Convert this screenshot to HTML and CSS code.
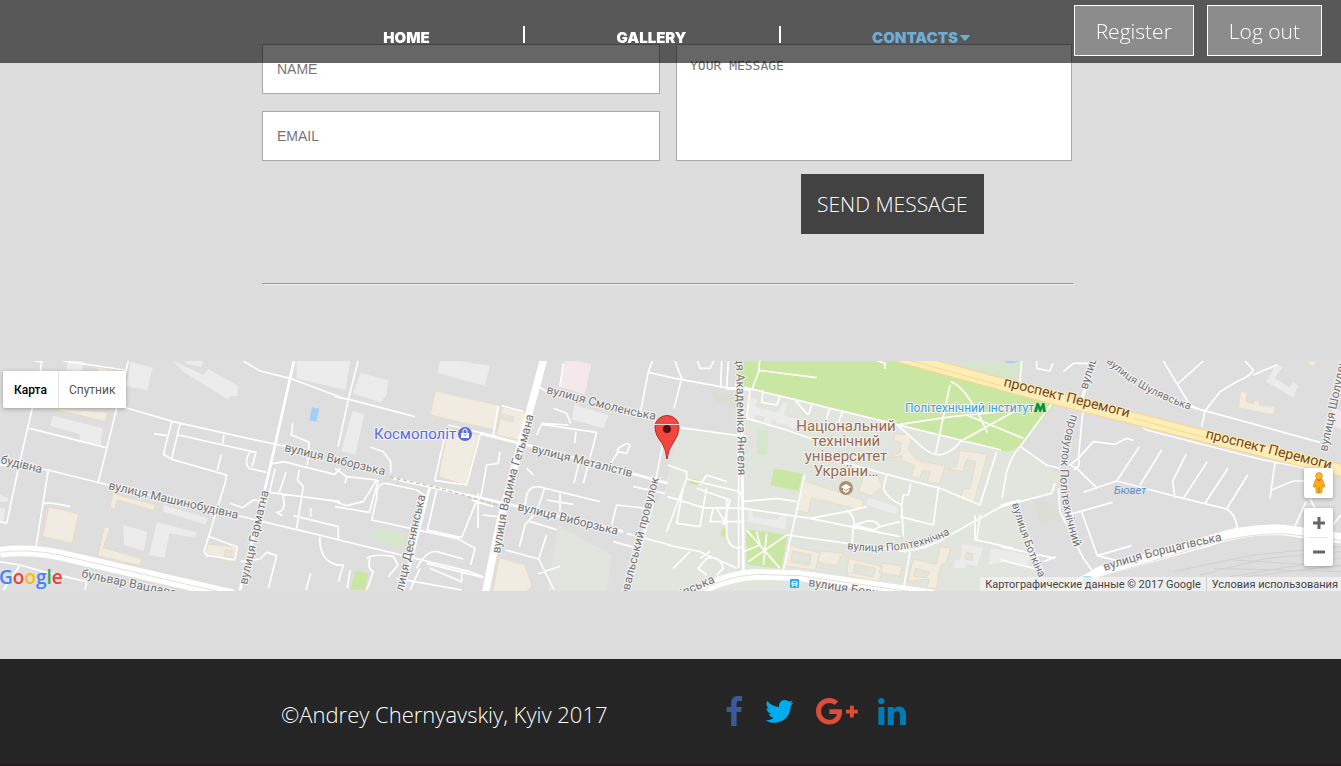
FILE: index.html
```html
<!DOCTYPE html>
<html lang="en">
<head>
<meta charset="utf-8">
<title>Contacts</title>
<link rel="stylesheet" href="styles.css">
</head>
<body>
<header class="header">
  <nav class="nav" aria-label="Main">
    <a class="nav-link" href="#home">HOME</a>
    <a class="nav-link" href="#gallery">GALLERY</a>
    <a class="nav-link active" href="#contacts">CONTACTS<svg class="caret" viewBox="0 0 10 6" aria-hidden="true"><path d="M.8 0h8.4q1 .2.4 1L5.6 5.500q-.6.6-1.200 0L.4 1Q-.200.200.8 0z"/></svg></a>
  </nav>
  <div class="account">
    <button class="account-btn" type="button">Register</button>
    <button class="account-btn" type="button">Log out</button>
  </div>
</header>

<main>
  <section class="contact">
    <form class="form">
      <div class="fields">
        <input class="field" type="text" placeholder="NAME" aria-label="Name">
        <input class="field" type="email" placeholder="EMAIL" aria-label="Email">
      </div>
      <div class="message">
        <textarea class="field area" placeholder="YOUR MESSAGE" aria-label="Your message"></textarea>
        <button class="send" type="button">SEND MESSAGE</button>
      </div>
    </form>
    <hr class="rule">
  </section>

  <section class="map" aria-label="Map">
    <svg class="map-canvas" viewBox="0 361 1341 230" preserveAspectRatio="xMidYMid slice">
      <g transform="translate(0 355) scale(.33333)">
        <!-- campus and park areas -->
        <path class="campus" d="M1995 400L2010 330L2035 210L2210 240L2225 90L2700 210L3010 285L3065 275L3180 360L3165 410L3030 455L3130 700V720H1860L1900 570Z"/>
        <path class="campus" d="M1675 510L1835 600L1820 720H1640Z"/>
        <path class="park" d="M2205 10H2690L3003 100L3170 140L3060 275Q3030 295 2990 285L2700 208L2225 92Z"/>
        <path class="park-pale" d="M2830 10H3078L3062 80L3003 68Z"/>
        <path class="water" d="M2998 10H3068Q3050 27 3020 24Z"/>
        <path class="park" d="M2238 523L2362 540L2345 642L2240 628ZM2322 340L2408 356L2395 408L2312 390ZM2070 370L2098 374L2092 390L2066 386ZM2166 518l14 3-5 24-13-3z"/>
        <path class="park" d="M1064 648L1106 654L1094 705H1052Z"/>
        <path class="park-pale" d="M1122 524Q1160 518 1218 540Q1224 558 1208 576Q1160 572 1124 556Q1115 540 1122 524ZM2272 228L2304 224L2302 300L2270 298Z"/>
        <path class="pond" d="M936 157L958 161L949 200L928 196Z"/>
        <path class="clinic" d="M1696 10L1774 28L1754 118L1680 96ZM3996 160L4023 168V222L3996 212Z"/>
        <!-- grey buildings -->
        <path class="block" d="M392 22L458 38L442 106L378 94ZM204 10H254L244 50L200 44ZM160 182L308 220L302 272L238 258L240 238L150 212ZM890 10H1052L1036 106L890 70ZM520 18L610 60L625 42L714 92L712 124L690 124L685 134L552 52ZM545 10L610 18L604 36L562 26ZM1082 54L1165 76L1160 120L1142 142L1060 116ZM1058 168L1094 178L1066 298L1024 288ZM1322 10L1470 32L1454 92L1312 54ZM1722 150L1826 180L1810 220L1716 194ZM370 510L442 530L432 588L372 570ZM470 502L590 532L585 548L508 535L494 608L448 600ZM490 450L625 490L615 508L490 470ZM0 420L24 428V440H0ZM0 460H16L10 500L0 496Z"/>
        <path class="block" d="M2252 126L2272 134L2266 155L2336 175L2350 140L2364 144L2352 180L2430 205V220L2390 214L2380 225L2365 210L2330 205L2322 190L2312 208L2290 202L2295 186L2268 180L2262 196L2242 190ZM2245 460L2258 462L2258 486L2330 495L2348 475L2362 478L2354 522L2242 500ZM2605 428L2694 456L2688 478L2600 450ZM2886 566L2948 578L2932 634L2898 628L2895 640H2860L2864 616H2882ZM2974 580L3040 590V616L2965 630ZM3830 26L3848 36L3824 68L3868 98L3880 82L3894 94L3880 128L3798 80ZM3003 585L3090 600L3084 632L3010 620Z"/>
        <path class="dim" d="M2130 108L2204 120L2205 160L2150 140ZM3100 434L3160 446L3178 490L3120 508Z"/>
        <!-- sand buildings -->
        <path class="sand" d="M145 158L322 172L316 200L130 154ZM292 36L350 48V62L290 48ZM338 416L466 450L460 466L352 434L344 462L330 458ZM146 456L236 476L216 564L128 544ZM314 516L330 518L310 578L424 612L420 632L294 602ZM622 568L710 576L694 622L616 596ZM1306 108L1500 152L1488 226L1290 180ZM1508 156L1578 174L1558 256L1490 240ZM1344 220L1436 240L1398 392L1316 364ZM1498 608L1574 630L1596 692L1580 710H1478Z"/>
        <path class="sand" d="M2414 378L2590 436L2584 466L2434 428L2424 474L2388 468ZM2590 362L2636 366L2646 396L2612 422L2576 408ZM2686 236L2734 240L2726 288L2755 318L2836 332L2818 386L2782 380L2790 350L2768 346L2758 370L2734 364L2744 332L2704 316L2706 302L2662 310L2700 292L2704 262L2680 256ZM2880 286L2962 298L2922 442L2880 434L2890 402L2910 400L2928 320L2900 314L2888 350L2842 342L2870 335ZM2366 570L2460 594L2446 646L2354 632ZM2462 588L2528 594L2510 632L2452 620ZM2546 610L2648 634L2638 680L2540 662ZM2646 624L2706 632L2700 664L2638 652ZM2740 612L2810 628L2820 575L2852 580L2838 622L2822 630L2810 700H2780L2788 672L2724 678ZM3722 110L3742 112L3738 140L3760 146L3764 136L3780 138L3778 150L3826 154L3820 180L3716 158ZM3915 18H3955L3938 34Z"/>
        <path class="hole" d="M2378 588L2434 600L2428 632L2370 620ZM2566 626L2626 640L2620 666L2558 654ZM2746 640L2788 650L2780 668L2742 664ZM2898 592l22 4-4 20-22-4zM676 584l22 2-4 24-22-4zM1508 178L1542 186L1540 200L1504 192Z"/>
        <!-- rail yard -->
        <path class="rail" d="M3520 650L3760 600L4023 575M3600 660L3800 610L4023 590M3690 665L4023 610M3740 665L4023 630M3640 640L4023 650M3700 615L4023 635"/>

        <!-- side streets -->
        <g class="street">
          <path d="M125 18L120 60L60 318L20 505L0 500M105 18L130 22M385 18L350 160L295 382M145 345L108 575M730 18L780 48L870 70L1020 126M370 156L520 200L720 245L860 275M80 218L318 278M515 200L490 298L518 314L680 360L675 385L612 590L622 606M540 206L515 312M462 236L500 242M535 240L768 292L756 335M672 240L668 266M750 290Q730 325 748 340L802 353M664 298L652 346M878 205L874 240L928 262L922 330M808 328L850 320L1004 358L1020 340M826 340L808 412M858 352L838 412M898 345L892 375L910 395L890 520M808 412L1020 440M848 418Q862 470 830 472L848 482M690 445L728 458L760 435L800 440M880 482L1015 515V550M932 460V485M628 545L712 576L704 615L616 600M720 620L780 612L800 592L830 602L805 700M960 545Q955 620 1020 632M932 655L918 705M130 446Q150 440 210 455M0 620L60 630L130 650L260 680L255 705M60 630L10 705M190 18L375 45M0 330L145 345L300 384L890 524L1020 555"/>
          <path d="M1074 18L1046 130L1014 275M1005 125L1050 134L1245 185M1110 276L1150 290L1172 320V355M1005 340L1040 365L1130 375M1035 385L1040 365M1130 375L1090 440L1040 452L1005 440M1135 375L1108 472L1005 455M1160 385Q1128 382 1130 430L1115 495L1370 550L1425 580L1412 630M1005 552L1410 650L1450 665M1160 385L1250 405L1280 425M1310 405L1282 525L1385 548L1435 425M1340 220L1304 376L1400 390L1440 240M1345 210L1490 245M1495 152L1480 240M1505 152L1570 170M1500 290L1495 325L1460 330L1442 430M1430 440L1480 455M1448 480L1505 486M1434 415V520M1415 435L1430 440M1625 205L1705 210M1610 240L1625 208L1790 232L1750 385M1700 175L1712 205M1660 160L1700 175M1728 230L1724 265M1740 310L1722 385M1850 300L1855 280L1880 265L1890 270L1880 295L1854 290L1830 330M1600 360L1580 340M1580 420Q1590 390 1620 396L1800 440M1575 450L1580 420M1634 400L1610 470L1575 510L1558 575M1680 415V470M1640 435L1720 448M1590 500L1670 524M1640 540L1616 612L1662 705M1615 656L1680 634M1516 585L1616 612M1250 640Q1280 585 1310 590L1390 612M1280 625L1450 668M1385 645V680L1290 640M1260 640L1230 705M1100 610Q1120 595 1180 604L1194 630L1165 665M1190 670L1385 705M1110 610Q1100 640 1120 650L1100 705M1005 630H1030L1015 680M1050 645L1042 700"/>
          <path d="M1610 90L1640 110M1690 25L1680 95M1960 10L1945 50L1922 170M1945 52L2025 70L2190 100M1980 210L2240 245M1988 270L1968 370M1900 395L1995 415M1835 510L1850 450L1940 460M1840 560L1905 578M1880 535L2010 570M2025 18L2045 70L2022 160M2090 10L2100 40H2130L2145 10M2165 18L2162 98M2185 18L2180 98M2190 100L2250 105L2240 190L2360 225L2460 260M2280 10L2276 50L2255 105M2276 46L2450 68M2610 10L2655 25V42M2205 90L3003 285M2290 105L2285 142L2330 150L2340 125M2380 130L2425 180M2435 150L2425 180M2528 170L2510 215M2490 158L2475 205M2852 80Q2900 95 2962 232M2850 90L2806 300M2700 208L2855 185L3003 170M2880 260L3050 165M2900 180L3070 250M2690 208L2760 270Q2790 300 2820 300Q2860 290 2880 260M2003 330L2060 350V370L2000 530M2060 372L2220 410L2230 440L2330 430L2390 440M2090 400L2190 435L2170 510M2120 360L2180 380M2100 390L2120 360M2003 425L2110 458L2230 460L2430 490L2700 545M2050 398L2030 505L2100 515M2140 460L2130 500H2230M2150 460L2180 510M2180 430V540Q2190 590 2230 575M2100 515L2120 398M2414 360L2350 645M2003 570L2100 590L2210 640M2120 610Q2160 600 2170 640L2150 660M2120 610L2095 640L2120 660M2130 590L2100 610M2020 640L2070 590M2240 525L2340 640M2360 540L2245 620M2300 535L2290 630M2270 530L2280 570L2230 590M2362 540L2720 590M2430 490L2540 470L2600 455M2540 465Q2570 490 2560 515L2556 565M2560 515Q2620 480 2640 515L2700 500M2640 515L2622 525L2560 510M2520 320L2650 355L2820 400L2940 450L2990 290M2660 360L2650 400Q2660 430 2705 450L2710 420H2725L2732 385M2705 450L2710 545M2700 485L2800 510L2815 400M2730 590L2710 705M2925 480V555L3003 570M2940 480L2930 555L3040 580M2216 180V640"/>
          <path d="M2710 590Q2790 580 2850 540L3003 455L3155 415L3165 385M3065 18L3060 80M3110 18V40L3150 48L3158 25M3190 50L3220 25H3280M3490 18L3570 150L3615 170L3605 215M3535 85L3610 18M3735 18L3760 45Q3755 62 3710 80L3660 110L3615 168M3760 60L3830 30M3570 155L3960 262M3415 205L3440 225L3790 315L3950 345M3825 322L3810 430M3815 405L3880 378H3920M3160 140L3062 272Q3035 300 3020 350L3006 430M3062 275L3140 330L3180 340M3250 155L3235 310L3210 330L3230 340L3292 400M3235 310L3280 260L3345 268L3380 250L3400 256M3235 310Q3245 335 3220 345M3250 412L3350 378L3550 430L3680 462Q3710 480 3712 525M3418 275L3350 378M3485 285L3420 390M3558 298L3518 380L3525 428M3622 320L3550 430M3684 340L3615 445M3743 360L3680 462M3210 478L3338 442M3245 470L3292 602L3395 572M3292 602L3400 630M3003 450L3060 435M3175 400L3180 470L3250 610L3275 645M3040 445L3090 560L3130 650M3003 575L3165 610M3003 615L3120 645M3130 620L3168 605M3918 440L3880 525M3930 430L3945 460M4023 480L3990 520"/>
        </g>
        <!-- wider streets -->
        <path class="road-mid" d="M882 18L805 360L720 705M1290 395L1210 705M1960 440L1880 720M1440 235L1600 275L2003 385M1180 370L1535 450L1870 530M2180 100H2225L2230 650M3282 18L3240 150"/>
        <path class="trail" d="M1170 366L1300 395L1500 452M1195 366L1192 390"/>
        <path class="road-wide" d="M1632 10L1580 200L1500 500L1455 720"/>
        <!-- boulevards -->
        <path class="avenue" d="M0 592Q80 580 180 600L700 720M2080 720Q2160 665 2270 658L2400 662L2800 720M3180 720L3300 650L3620 560Q3730 520 3850 525L4023 550"/>
        <path class="avenue-line" d="M0 592Q80 580 180 600L700 720M2090 718Q2160 665 2270 658L2400 662L2800 720M3200 718L3300 666L3620 570Q3730 536 3850 536L4023 556"/>
        <path class="highway-edge" d="M2700 5L3150 127L3400 190L4040 350"/>
        <path class="highway" d="M2700 5L3150 127L3400 190L4040 350"/>
        <path class="highway-line" d="M2700 8L3003 92M3400 190L3640 254"/>
      </g>

      <defs>
        <path id="pVyb" d="M284 451L400 479"/>
        <path id="pSmol" d="M546 393L580 402Q630 417 680 424"/>
        <path id="pPol" d="M847 549Q880 554 910 548T960 528"/>
        <path id="pSchul" d="M1106 362Q1130 385 1160 398T1210 416"/>
        <path id="pProv" d="M1071 414Q1055 465 1063 505T1084 572"/>
        <path id="pBor" d="M1105 571Q1150 555 1240 537"/>
        <path id="pGet" d="M500 554Q510 490 524 450T537 380"/>
        <path id="pBotk" d="M1012 504Q1025 550 1045 590"/>
        <path id="pInst" d="M628 597Q642 540 664 460"/>
        <path id="pKievska" d="M683 597Q705 585 735 576"/>
      </defs>
      <g class="label">
        <text transform="translate(0 463) rotate(14)">будівна</text>
        <text transform="translate(108 489) rotate(13)">вулиця Машинобудівна</text>
        <text transform="translate(81 577) rotate(12)">бульвар Вацлава</text>
        <text transform="translate(247 585) rotate(-77)">вулиця Гарматна</text>
        <text><textPath href="#pVyb">вулиця Виборзька</textPath></text>
        <text transform="translate(402 597) rotate(-77)">улиця Деснянська</text>
        <text><textPath href="#pGet">вулиця Вадима Гетьмана</textPath></text>
        <text><textPath href="#pSmol">вулиця Смоленська</textPath></text>
        <text transform="translate(531 452) rotate(14)">вулиця Металістів</text>
        <text transform="translate(517 510) rotate(14)">вулиця Виборзька</text>
        <text><textPath href="#pInst">овальський провулок</textPath></text>
        <text transform="translate(736 357) rotate(89)">ця Академіка Янгеля</text>
        <text><textPath href="#pKievska">івська</textPath></text>
        <text transform="translate(808 586) rotate(9)">вулиця Борщагівська</text>
        <text class="small"><textPath href="#pPol">вулиця Політехнічна</textPath></text>
        <text class="small"><textPath href="#pSchul">вулиця Шулявська</textPath></text>
        <text><textPath href="#pProv">провулок Політехнічний</textPath></text>
        <text class="small"><textPath href="#pBotk">вулиця Боткіна</textPath></text>
        <text><textPath href="#pBor">вулиця Борщагівська</textPath></text>
        <text transform="translate(1087 390) rotate(-72)">вулиця</text>
        <text transform="translate(1327 452) rotate(-78)">вулиця Шолуденка</text>
      </g>
      <g class="label label-road">
        <text transform="translate(1003 386) rotate(14)">проспект Перемоги</text>
        <text transform="translate(1205 438) rotate(14)">проспект Перемоги</text>
      </g>
      <g class="label label-uni">
        <text x="846" y="431">Національний</text>
        <text x="846" y="446">технічний</text>
        <text x="846" y="461">університет</text>
        <text x="846" y="476">України…</text>
      </g>
      <text class="label label-shop" x="374" y="439">Космополіт</text>
      <text class="label label-metro" x="905" y="412">Політехнічний інститут</text>
      <text class="label label-water" x="1114" y="494">Бювет</text>

      <circle cx="465" cy="434" r="7" fill="#5b6bd8"/>
      <path d="M461 433h8v5h-8z" fill="#fff"/>
      <path d="M463 433v-2a2 2 0 0 1 4 0v2" fill="none" stroke="#fff"/>
      <path d="M463.500 434.500q1.500 2 3 0" fill="none" stroke="#5b6bd8" stroke-width=".8"/>
      <circle cx="846" cy="488" r="7" fill="#b08d73"/>
      <path d="M841 487l5-3 5 3-5 3zM843 489l3 2 3-2v2l-3 2-3-2z" fill="#fff"/>
      <path d="M1034 412l2.500-9h2l2 4 2-4h2l1.500 9h-3l-.5-4-1.500 4h-1.500l-1.500-4-1 4z" fill="#0b9444"/>
      <rect x="790" y="579" width="9" height="9" rx="1" fill="#1faeef"/>
      <path d="M792 585v-3q2.500-1.500 5 0v3zM792 587l1-2M797 587l-1-2M792 583.500h5" fill="none" stroke="#fff"/>
      <rect x="1083" y="576" width="8" height="8" rx="1" fill="#a8def5"/>
      <g class="marker">
        <path d="M667 459q-1-9-5-16-7-8-7-16a12 11.500 0 0 1 24 0q0 8-6 16-5 7-6 16z" fill="#f2473f" stroke="#b32d28"/>
        <circle cx="667" cy="429" r="4" fill="#54130f"/>
        <path d="M654 424.500h26" stroke="#ffd4cf"/>
      </g>
    </svg>

    <div class="map-types">
      <button class="map-type current" type="button">Карта</button>
      <button class="map-type" type="button">Спутник</button>
    </div>
    <div class="map-logo" role="img" aria-label="Google"><span class="g-blue">G</span><span class="g-red">o</span><span class="g-yellow">o</span><span class="g-blue">g</span><span class="g-green">l</span><span class="g-red">e</span></div>
    <div class="map-tools">
      <button class="pegman" type="button" aria-label="Street view">
        <svg viewBox="0 0 14 22" width="14" height="22"><path d="M3.500 7.500h7l2.500 7-1.600.8-1-2.300-.6 8H4.300l-.6-8-1 2.300L1 14.500z" fill="#f9ae1b" stroke="#d58a12" stroke-width=".7"/><circle cx="7" cy="4" r="3.400" fill="#f9b62b" stroke="#d58a12" stroke-width=".7"/><path d="M4.500 7.500L7 10l2.500-2.500z" fill="#e8742a"/><path d="M7 15v6" stroke="#c87a12"/></svg>
      </button>
      <div class="zoom">
        <button class="zoom-btn" type="button" aria-label="Zoom in"><svg viewBox="0 0 12 12" width="12" height="12"><path d="M6 0v12M0 6h12" stroke="#666" stroke-width="3"/></svg></button>
        <button class="zoom-btn" type="button" aria-label="Zoom out"><svg viewBox="0 0 12 12" width="12" height="12"><path d="M0 6h12" stroke="#666" stroke-width="3"/></svg></button>
      </div>
    </div>
    <div class="map-legal"><span>Картографические данные © 2017 Google</span><a href="#terms">Условия использования</a></div>
  </section>
</main>

<footer class="footer">
  <p class="copy">©Andrey Chernyavskiy, Kyiv 2017</p>
  <div class="social">
    <a href="#facebook" aria-label="Facebook"><svg width="17" height="30" viewBox="0 0 17 30" fill="#3b5998"><path d="M16 .2v4.800h-2.800c-2.200 0-2.600 1-2.600 2.500v3.400h5.200l-.7 5.200h-4.500V30H5.200V16.100H.5v-5.200h4.700V7C5.200 2.500 7.900 0 12 0c1.900 0 3.600.1 4 .2z"/></svg></a>
    <a href="#twitter" aria-label="Twitter"><svg width="29" height="23" viewBox="0 0 28 23" fill="#00aced"><path d="M28 2.700a11 11 0 0 1-2.800 2.900C25.600 14 19.400 22.800 8.800 22.800c-3.200 0-6.200-.9-8.800-2.600 3 .4 6-.5 8.400-2.400-2.500 0-4.600-1.700-5.300-4 .8.200 1.700.1 2.500-.1C3 13.200 1 10.900 1 8.100c.8.400 1.700.7 2.600.7C1.100 7 .300 3.700 1.900 1.100c2.800 3.500 7 5.800 11.800 6C12.800 3.500 15.500 0 19.300 0c1.700 0 3.200.7 4.200 1.800 1.300-.3 2.500-.7 3.600-1.400-.4 1.300-1.300 2.500-2.500 3.200 1.200-.2 2.300-.500 3.400-.9z"/></svg></a>
    <a href="#googleplus" aria-label="Google Plus"><svg width="40" height="27" viewBox="0 0 40 27" fill="#dd4b39"><path d="M13.300 11.200h12.600c.1.700.2 1.300.2 2.200C26.100 21 21 26.500 13.300 26.500 5.900 26.500 0 20.700 0 13.300S5.900 0 13.300 0c3.600 0 6.600 1.300 8.900 3.500l-3.600 3.400c-1-.9-2.700-2-5.300-2-4.500 0-8.200 3.700-8.200 8.400s3.700 8.400 8.200 8.400c5.300 0 7.200-3.800 7.500-5.800h-7.500zM34 7.700h3.800v4h4v3.900h-4v4H34v-4h-4v-3.900h4z"/></svg></a>
    <a href="#linkedin" aria-label="LinkedIn"><svg width="28" height="27" viewBox="0 0 28 27" fill="#007bb6"><path d="M.4 8.900h6V27h-6zM3.400 0c2 0 3.300 1.400 3.300 3.100 0 1.800-1.300 3.200-3.400 3.200C1.300 6.300 0 4.900 0 3.100 0 1.400 1.400 0 3.400 0zM9.700 8.900h6v2.600c.8-1.200 2.200-3 5.400-3 4 0 6.900 2.600 6.900 8.200V27h-6v-9.700c0-2.400-.9-4.100-3-4.100-2.200 0-3.300 1.700-3.300 4.100V27h-6z"/></svg></a>
  </div>
</footer>
</body>
</html>
```

FILE: styles.css
```css
* { box-sizing: border-box; }

body {
  margin: 0;
  min-height: 100vh;
  display: flex;
  flex-direction: column;
  background: #ddd;
  font-family: "Open Sans", sans-serif;
  font-weight: 300;
  overflow-x: hidden;
}

button { font: inherit; cursor: pointer; }

/* Header */
.header {
  position: fixed;
  inset: 0 0 auto;
  z-index: 10;
  height: 63px;
  display: grid;
  grid-template-columns: minmax(0, 1fr) 782px minmax(0, 1fr);
  background: rgba(0, 0, 0, .6);
}

.nav {
  grid-column: 2;
  display: grid;
  grid-template-columns: 234px 256px 1fr;
  align-content: start;
  padding: 26px 0 0 11px;
}

.nav-link {
  height: 17px;
  padding-top: 3px;
  border-right: 2px solid #fff;
  color: #fff;
  font: 900 15px/18px Inter, sans-serif;
  text-align: center;
  text-decoration: none;
  white-space: nowrap;
}

.nav-link.active { border: 0; color: #6caed6; }

.caret { width: 10px; height: 6px; margin: 0 0 2px 2px; fill: currentColor; }

.account {
  display: flex;
  justify-content: flex-end;
  align-items: flex-start;
  gap: 13px;
  padding: 5px 19px 0 0;
}

.account-btn {
  height: 51px;
  padding: 0 21px;
  border: 1px solid #fff;
  background: rgba(255, 255, 255, .3);
  color: #fff;
  font-size: 21px;
  white-space: nowrap;
}

/* Contact form */
.contact {
  width: 817px;
  max-width: 100%;
  margin: 0 auto;
  padding: 44px 5px 0 0;
}

.form {
  display: grid;
  grid-template-columns: 398px 396px;
  gap: 16px;
}

.fields { display: flex; flex-direction: column; gap: 17px; }

.field {
  width: 100%;
  height: 50px;
  padding: 0 14px;
  border: 1px solid #a9a9a9;
  border-radius: 0;
  background: #fff;
  color: #333;
  font: 14px "Liberation Sans", sans-serif;
}

.field::placeholder { color: #757575; }

.area {
  display: block;
  height: 117px;
  padding: 13px;
  font: 13px/16px "DejaVu Sans Mono", monospace;
  resize: none;
}

.message { display: flex; flex-direction: column; gap: 13px; }

.send {
  align-self: flex-start;
  height: 60px;
  margin-left: 125px;
  padding: 0 16px;
  border: 0;
  background: #424242;
  color: #fff;
  font-size: 21px;
  white-space: nowrap;
}

.rule {
  margin: 49px 0 76px;
  border: 1px solid;
  border-color: #9a9a9a #eee #eee #9a9a9a;
}

/* Map */
.map {
  position: relative;
  height: 230px;
  overflow: hidden;
  background: #dedede;
  font-family: Roboto, sans-serif;
  font-weight: 400;
}

.map-canvas { display: block; width: 100%; height: 100%; }

.campus { fill: #e2e4de; }
.park { fill: #cae6a3; }
.park-pale { fill: #d6e5cb; }
.water, .pond { fill: #a3ccff; }
.clinic { fill: #f5e8ed; }
.block { fill: #ececec; }
.dim { fill: #dcddd5; }
.sand { fill: #f1ece2; stroke: #eadcc0; stroke-width: 3; }
.hole { fill: #e2e4de; stroke: #eadcc0; stroke-width: 3; }
.rail { fill: none; stroke: #d0d0d0; stroke-width: 3; }
.street, .road-mid, .road-wide, .avenue, .avenue-line, .trail,
.highway, .highway-edge, .highway-line { fill: none; stroke: #fff; stroke-linejoin: round; }
.street { stroke-width: 5; }
.road-mid { stroke-width: 8; }
.road-wide { stroke-width: 22; }
.avenue { stroke-width: 32; }
.avenue-line { stroke: #e4e0d4; stroke-width: 3; }
.trail { stroke: #c6c4ae; stroke-width: 4; stroke-dasharray: 12 8; }
.highway-edge { stroke: #f6d88a; stroke-width: 38; }
.highway { stroke: #ffedb8; stroke-width: 32; }
.highway-line { stroke: #f6d88a; stroke-width: 3; }

.label {
  fill: #737373;
  stroke: #f4f4f4;
  stroke-width: 2px;
  paint-order: stroke;
  font: 12px Roboto, sans-serif;
}
.small { font-size: 11px; }
.label-road { fill: #75451b; stroke: #ffedb8; font-size: 14px; }
.label-uni { fill: #966c50; font-size: 15px; text-anchor: middle; }
.label-shop { fill: #5b6bd8; font-size: 15px; }
.label-metro { fill: #3aa3cf; font-size: 12px; }
.label-water { fill: #5f8fd0; stroke: none; font-size: 11px; font-style: italic; }

.map-types {
  position: absolute;
  top: 10px;
  left: 3px;
  display: flex;
  border-radius: 2px;
  box-shadow: 0 1px 4px rgba(0, 0, 0, .3);
}

.map-type {
  height: 37px;
  padding: 0 11px;
  border: 0;
  border-radius: 0 2px 2px 0;
  background: #fff;
  box-shadow: inset 1px 0 #e6e6e6;
  color: #565656;
  font-size: 12px;
}

.map-type.current {
  border-radius: 2px 0 0 2px;
  box-shadow: none;
  color: #000;
  font-weight: 500;
}

.map-logo {
  position: absolute;
  left: -1px;
  bottom: 2px;
  font: 600 19px/24px "Open Sans", sans-serif;
}
.g-blue { color: #4285f4; }
.g-red { color: #ea4335; }
.g-yellow { color: #fbbc05; }
.g-green { color: #34a853; }

.map-tools {
  position: absolute;
  top: 107px;
  right: 8px;
  display: flex;
  flex-direction: column;
  gap: 10px;
}

.pegman, .zoom {
  width: 29px;
  border: 0;
  border-radius: 2px;
  background: #fff;
  box-shadow: 0 1px 4px rgba(0, 0, 0, .3);
}

.pegman { display: grid; place-items: center; height: 30px; padding: 0; }

.zoom { display: flex; flex-direction: column; padding: 0 5px; }

.zoom-btn {
  display: grid;
  place-items: center;
  height: 29px;
  padding: 0;
  border: 0;
  background: none;
}

.zoom-btn + .zoom-btn { border-top: 1px solid #e6e6e6; }

.map-legal {
  position: absolute;
  right: 0;
  bottom: 0;
  display: flex;
  height: 14px;
  background: rgba(245, 245, 245, .7);
  color: #444;
  font-size: 11px;
  line-height: 15px;
  white-space: nowrap;
}

.map-legal > * { padding: 0 5px; }
.map-legal a { padding-right: 3px; border-left: 1px solid #ccc; color: #444; text-decoration: none; }

/* Footer */
.footer {
  flex: 1;
  display: flex;
  align-items: flex-start;
  gap: 118px;
  margin-top: 68px;
  padding: 37px 0 0 281px;
  border-bottom: 2px solid #201c20;
  background: #252525;
  color: #fff;
}

.copy { margin: 3px 0 0; font-size: 22px; line-height: 30px; }

.social { display: flex; align-items: center; gap: 22px; height: 30px; }

.social a { display: block; }
.social svg { display: block; overflow: visible; }
```
